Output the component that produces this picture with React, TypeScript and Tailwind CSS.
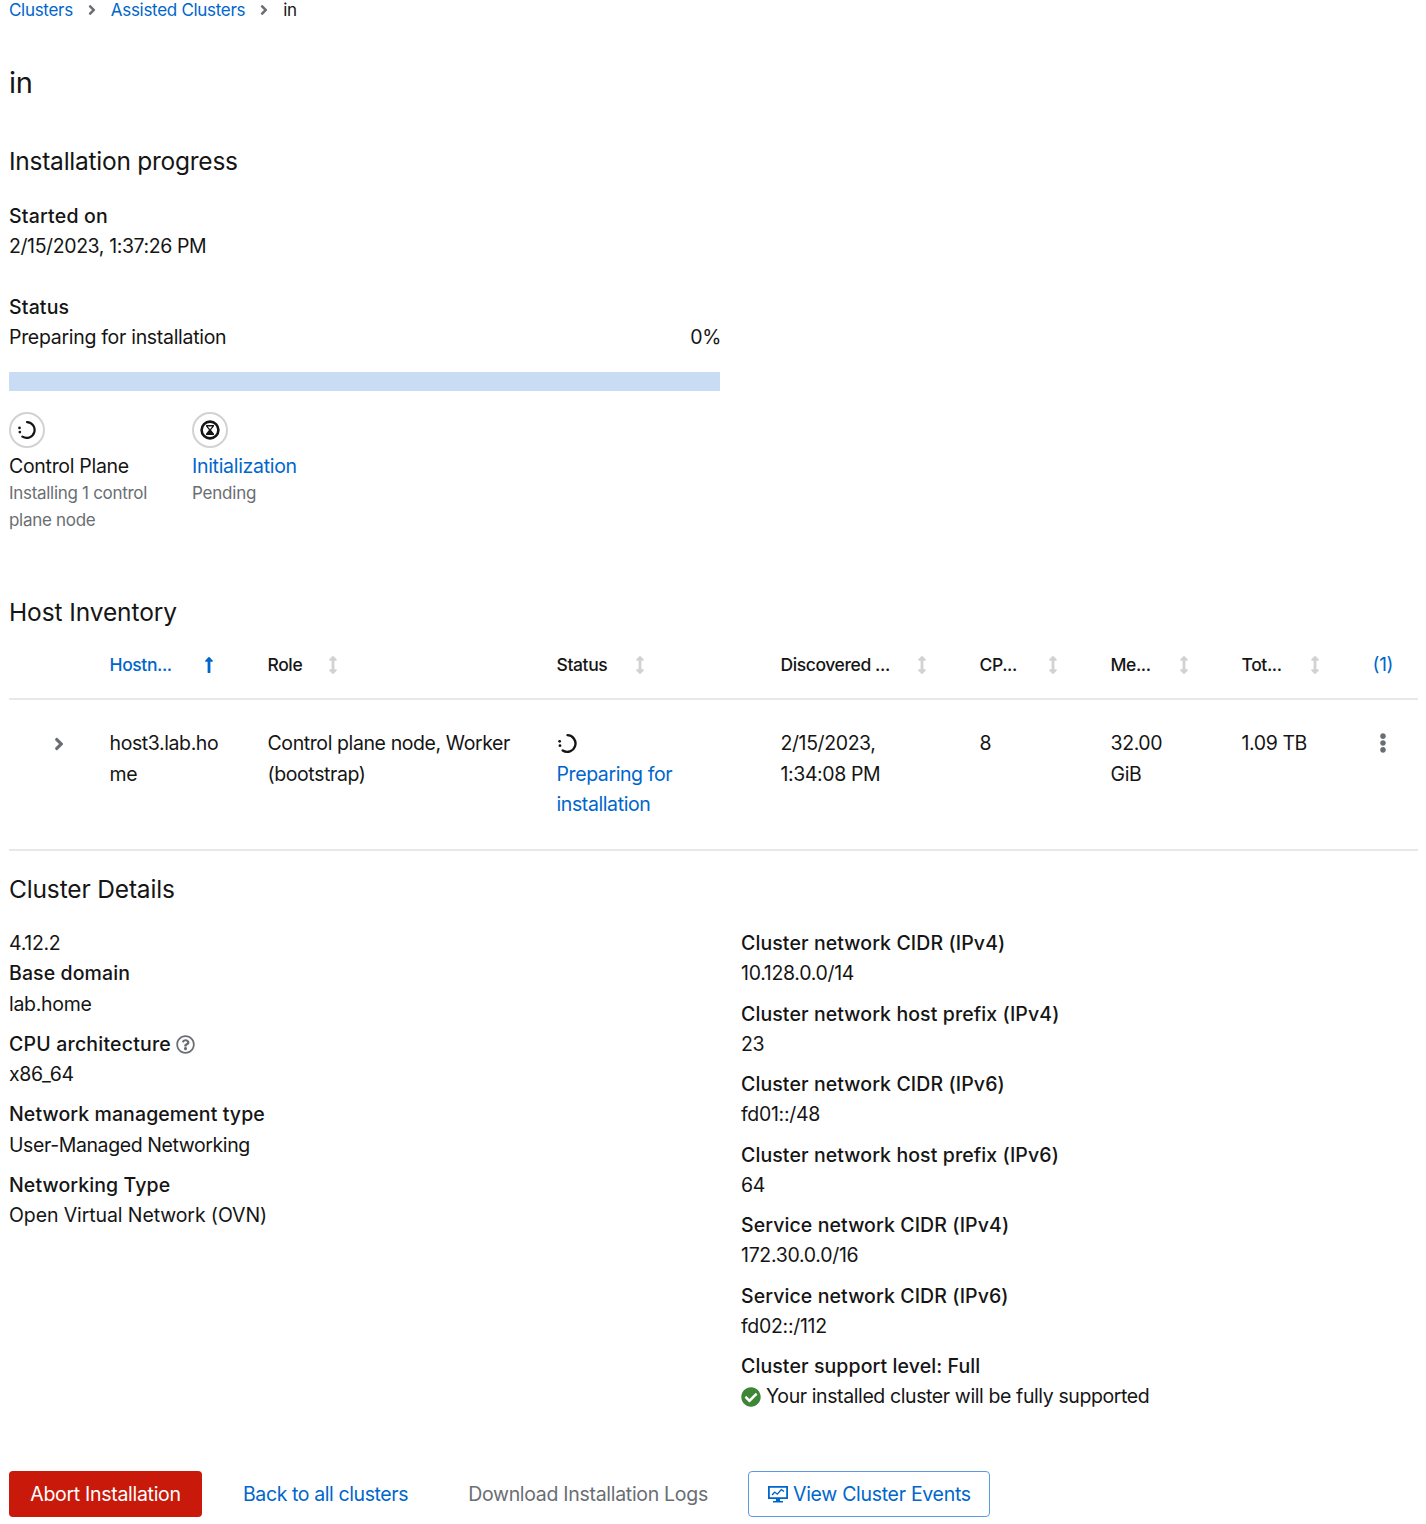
import { FaAngleRight, FaArrowsAltV, FaCheckCircle, FaEllipsisV, FaLongArrowAltUp, FaRegQuestionCircle } from 'react-icons/fa';

const columns = [
  { label: 'Hostn...', width: 'w-[98px]', active: true },
  { label: 'Role', width: 'w-[64px]' },
  { label: 'Status', width: 'w-[82px]' },
  { label: 'Discovered ...', width: 'w-[140px]' },
  { label: 'CP...', width: 'w-[72px]' },
  { label: 'Me...', width: 'w-[72px]' },
  { label: 'Tot...', width: 'w-[72px]' },
];

const networkRows = [
  ['Cluster network CIDR (IPv4)', '10.128.0.0/14'],
  ['Cluster network host prefix (IPv4)', '23'],
  ['Cluster network CIDR (IPv6)', 'fd01::/48'],
  ['Cluster network host prefix (IPv6)', '64'],
  ['Service network CIDR (IPv4)', '172.30.0.0/16'],
  ['Service network CIDR (IPv6)', 'fd02::/112'],
];

function Spinner({ size }: { size: number }) {
  return (
    <svg width={size} height={size} viewBox="0 0 24 24" fill="none" stroke="#151515" strokeWidth="2.7" strokeLinecap="round">
      <path d="M12 2.500A9.500 9.500 0 1 1 6.500 20" />
      <circle cx="3" cy="9.500" r="1.600" fill="#151515" stroke="none" />
      <circle cx="3.400" cy="14.500" r="1.600" fill="#151515" stroke="none" />
    </svg>
  );
}

function Hourglass() {
  return (
    <svg width="20" height="20" viewBox="0 0 20 20">
      <circle cx="10" cy="10" r="8.400" fill="none" stroke="#151515" strokeWidth="2.600" />
      <path d="M6 5h8v1.200L11 10l3 3.800V15H6v-1.200L9 10 6 6.200z" fill="#151515" />
      <path d="M7.800 6.600h4.400L10 9.200z" fill="#fff" />
    </svg>
  );
}

function MonitorIcon() {
  return (
    <svg width="20" height="20" viewBox="0 0 20 20" fill="#06c">
      <path d="M0 2h20v13H0zm1.800 1.800v9.400h16.400V3.800z" />
      <path d="M8 15h4v2h3v1.400H5V17h3z" />
      <path d="M3.500 10.500l3.200-3.300 2.500 2 4-4.400 3.300 2.200-.8 1.100-2.300-1.500-4 4.400-2.500-2-2.300 2.500z" />
    </svg>
  );
}

function Field({ label, value, className, valueClass }: { label: string; value: string; className?: string; valueClass?: string }) {
  return (
    <div className={className}>
      <div className="font-medium tracking-[0.1px]">{label}</div>
      <div className={valueClass}>{value}</div>
    </div>
  );
}

export default function App() {
  return (
    <div className="h-[1524px] overflow-hidden bg-white px-[9px] font-['Inter',sans-serif] text-[19.5px] leading-[30.4px] tracking-[-0.3px] text-[#151515]">
      <nav className="flex h-[19px] items-center pt-[1px] text-[17px] leading-[18px]">
        <span className="text-[#06c]">Clusters</span>
        <FaAngleRight className="mx-[11px] text-[16px] text-[#6a6e73]" />
        <span className="text-[#06c]">Assisted Clusters</span>
        <FaAngleRight className="mx-[11px] text-[16px] text-[#6a6e73]" />
        <span>in</span>
      </nav>

      <h1 className="mt-[42px] text-[29px] leading-[44px]">in</h1>
      <h2 className="mt-[38px] text-[24.5px] leading-[36px] tracking-[-0.25px]">Installation progress</h2>

      <div className="mt-[22px] font-medium tracking-[0.2px]">Started on</div>
      <div className="tracking-[-0.4px]">2/15/2023, 1:37:26 PM</div>

      <div className="mt-[30px] font-medium tracking-[0.15px]">Status</div>
      <div className="flex w-[712px] justify-between">
        <span>Preparing for installation</span>
        <span>0%</span>
      </div>
      <div className="mt-[19px] h-[19px] w-[711px] bg-[#c8ddf3]" />

      <div className="mt-[21px] flex">
        <div className="w-[183px]">
          <div className="flex h-[36px] w-[36px] items-center justify-center rounded-full border-2 border-[#d2d2d2]"><Spinner size={20} /></div>
          <div className="mt-[3px]">Control Plane</div>
          <div className="-mt-[1px] w-[150px] text-[17px] leading-[26.5px] tracking-[-0.3px] text-[#6a6e73]">Installing 1 control plane node</div>
        </div>
        <div>
          <div className="flex h-[36px] w-[36px] items-center justify-center rounded-full border-2 border-[#d2d2d2]"><Hourglass /></div>
          <div className="mt-[3px] text-[#06c]">Initialization</div>
          <div className="-mt-[1px] text-[17px] leading-[26.5px] tracking-[-0.2px] text-[#6a6e73]">Pending</div>
        </div>
      </div>

      <h2 className="mt-[61px] text-[24.5px] leading-[36px] tracking-[-0.1px]">Host Inventory</h2>

      <div className="mt-[4px] grid w-[1409px] grid-cols-[100.5px_158px_289px_224px_199px_131px_131px_131px_45.5px]">
        <div className="h-[66px] border-b-2 border-[#e8e8e8]" />
        {columns.map((c) => (
          <div key={c.label} className="flex h-[66px] items-center border-b-2 border-[#e8e8e8] pb-[2px] text-[17.5px] font-medium tracking-[-0.4px]">
            <span className={`${c.width} ${c.active ? 'text-[#06c]' : ''}`}>{c.label}</span>
            {c.active ? (
              <FaLongArrowAltUp className="-ml-[8px] text-[18px] text-[#06c]" />
            ) : (
              <FaArrowsAltV className="-ml-[8px] text-[18px] text-[#d2d2d2]" />
            )}
          </div>
        ))}
        <div className="flex h-[66px] items-center border-b-2 border-[#e8e8e8] pb-[2px] text-[19px] text-[#06c]">(1)</div>

        <div className="col-span-9 grid h-[151px] grid-cols-subgrid border-b-2 border-[#e8e8e8] pt-[28px] leading-[30.6px] tracking-[-0.4px]">
          <div className="flex h-[30px] items-start justify-end pr-[41px] pt-[6px]">
            <FaAngleRight className="text-[20px] text-[#6a6e73]" />
          </div>
          <div className="w-[112px] break-all">host3.lab.home</div>
          <div className="w-[250px]">Control plane node, Worker (bootstrap)</div>
          <div className="w-[140px]">
            <div className="flex h-[30.6px] items-center"><Spinner size={21} /></div>
            <div className="text-[#06c]">Preparing for installation</div>
          </div>
          <div className="w-[120px]">2/15/2023, 1:34:08 PM</div>
          <div>8</div>
          <div className="w-[70px]">32.00 GiB</div>
          <div>1.09 TB</div>
          <div className="flex h-[30px] items-center"><FaEllipsisV className="text-[20px] text-[#6a6e73]" /></div>
        </div>
      </div>

      <h2 className="mt-[20px] text-[24.5px] leading-[36px] tracking-[-0.15px]">Cluster Details</h2>

      <div className="mt-[21px] grid grid-cols-[732px_1fr]">
        <div>
          <div>4.12.2</div>
          <Field label="Base domain" value="lab.home" />
          <div className="mt-[9.7px]">
            <div className="flex items-center gap-[5px] font-medium tracking-[0.2px]">CPU architecture <FaRegQuestionCircle className="text-[19px] text-[#6a6e73]" /></div>
            <div>x86_64</div>
          </div>
          <Field className="mt-[9.7px]" label="Network management type" value="User-Managed Networking" valueClass="tracking-[-0.4px]" />
          <Field className="mt-[9.7px]" label="Networking Type" value="Open Virtual Network (OVN)" valueClass="tracking-[-0.1px]" />
        </div>
        <div className="flex flex-col gap-[9.7px]">
          {networkRows.map(([label, value]) => (
            <Field key={label} label={label} value={value} />
          ))}
          <div>
            <div className="font-medium tracking-[0.1px]">Cluster support level: Full</div>
            <div className="flex items-center gap-[5px]">
              <FaCheckCircle className="text-[20px] text-[#3e8635]" />
              <span className="tracking-[-0.4px]">Your installed cluster will be fully supported</span>
            </div>
          </div>
        </div>
      </div>

      <div className="mt-[59px] flex items-center">
        <button className="h-[46px] w-[193px] rounded-[4px] bg-[#c9190b] text-white">Abort Installation</button>
        <span className="ml-[41px] tracking-[-0.4px] text-[#06c]">Back to all clusters</span>
        <span className="ml-[60px] text-[#6a6e73]">Download Installation Logs</span>
        <button className="ml-[40.5px] flex h-[46px] w-[242px] items-center justify-center gap-[5px] rounded-[4px] border border-[#5b9bdf] text-[#06c]">
          <MonitorIcon />
          View Cluster Events
        </button>
      </div>
    </div>
  );
}
